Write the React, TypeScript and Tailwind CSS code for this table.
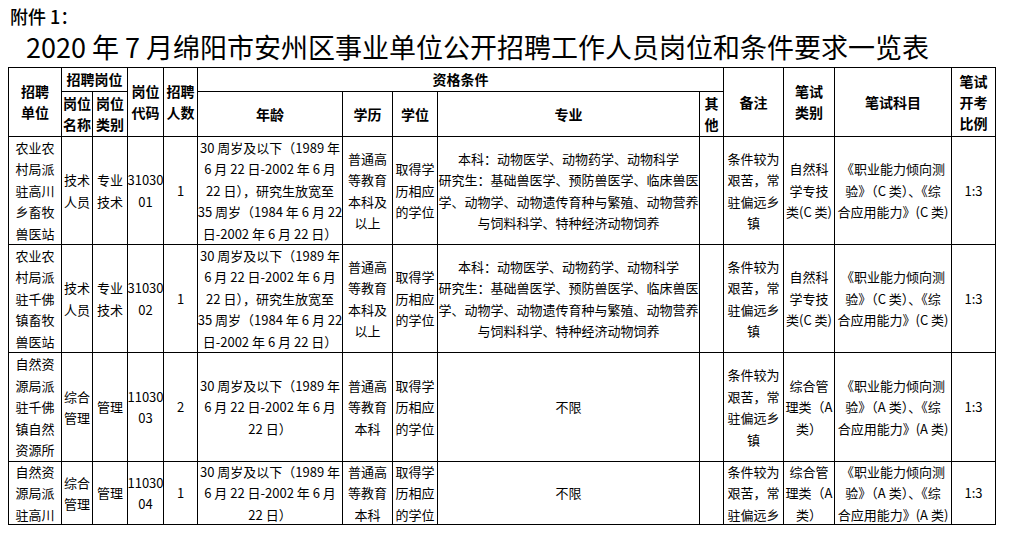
import React from "react";

// column widths taken from the source table (px)
// 单位 名称 类别 代码 人数 年龄 学历 学位 专业 其他 备注 类别 科目 比例

type CellProps = {
  lines: string[];
  className?: string;
  head?: boolean;
};

function Cell({ lines, className = "", head = false }: CellProps) {
  return (
    <div
      className={`flex flex-col items-center justify-center overflow-hidden border-r border-b border-black text-center ${
        head ? "text-[14px] font-bold leading-[21px]" : "text-[13px] leading-[21.5px]"
      } ${className}`}
    >
      {lines.map((l, i) => (
        <div key={i} className="whitespace-nowrap">
          {l}
        </div>
      ))}
    </div>
  );
}

const ageLong = [
  "30 周岁及以下（1989 年",
  "6 月 22 日-2002 年 6 月",
  "22 日），研究生放宽至",
  "35 周岁（1984 年 6 月 22",
  "日-2002 年 6 月 22 日）",
];
const ageShort = ["30 周岁及以下（1989 年", "6 月 22 日-2002 年 6 月", "22 日）"];
const major = [
  "本科：动物医学、动物药学、动物科学",
  "研究生：基础兽医学、预防兽医学、临床兽医",
  "学、动物学、动物遗传育种与繁殖、动物营养",
  "与饲料科学、特种经济动物饲养",
];
const remark = ["条件较为", "艰苦，常", "驻偏远乡", "镇"];
const subjectC = ["《职业能力倾向测", "验》（C 类）、《综", "合应用能力》(C 类)"];
const subjectA = ["《职业能力倾向测", "验》（A 类）、《综", "合应用能力》(A 类)"];

type Row = {
  unit: string[];
  name: string[];
  kind: string[];
  code: string[];
  num: string;
  age: string[];
  edu: string[];
  degree: string[];
  major: string[];
  remark: string[];
  testKind: string[];
  subject: string[];
};

const rows: Row[] = [
  {
    unit: ["农业农", "村局派", "驻高川", "乡畜牧", "兽医站"],
    name: ["技术", "人员"],
    kind: ["专业", "技术"],
    code: ["31030", "01"],
    num: "1",
    age: ageLong,
    edu: ["普通高", "等教育", "本科及", "以上"],
    degree: ["取得学", "历相应", "的学位"],
    major,
    remark,
    testKind: ["自然科", "学专技", "类(C 类)"],
    subject: subjectC,
  },
  {
    unit: ["农业农", "村局派", "驻千佛", "镇畜牧", "兽医站"],
    name: ["技术", "人员"],
    kind: ["专业", "技术"],
    code: ["31030", "02"],
    num: "1",
    age: ageLong,
    edu: ["普通高", "等教育", "本科及", "以上"],
    degree: ["取得学", "历相应", "的学位"],
    major,
    remark,
    testKind: ["自然科", "学专技", "类(C 类)"],
    subject: subjectC,
  },
  {
    unit: ["自然资", "源局派", "驻千佛", "镇自然", "资源所"],
    name: ["综合", "管理"],
    kind: ["管理"],
    code: ["11030", "03"],
    num: "2",
    age: ageShort,
    edu: ["普通高", "等教育", "本科"],
    degree: ["取得学", "历相应", "的学位"],
    major: ["不限"],
    remark,
    testKind: ["综合管", "理类（A", "类）"],
    subject: subjectA,
  },
  // last row runs past the page edge, only the visible part is kept
  {
    unit: ["自然资", "源局派", "驻高川"],
    name: ["综合", "管理"],
    kind: ["管理"],
    code: ["11030", "04"],
    num: "1",
    age: ageShort,
    edu: ["普通高", "等教育", "本科"],
    degree: ["取得学", "历相应", "的学位"],
    major: ["不限"],
    remark: ["条件较为", "艰苦，常", "驻偏远乡"],
    testKind: ["综合管", "理类（A", "类）"],
    subject: subjectA,
  },
];

export default function App() {
  return (
    <div className="h-[536px] w-[1009px] overflow-hidden bg-white font-['Noto_Sans_CJK_SC',sans-serif] text-black">
      <div className="pl-[10px] pt-[5px] text-[18px] font-medium leading-[22px]">附件 1：</div>
      <div className="pl-[26px] text-[27px] leading-[40px]">
        2020 年 7 月绵阳市安州区事业单位公开招聘工作人员岗位和条件要求一览表
      </div>

      <div className="ml-[8px] grid w-[988px] grid-cols-[53px_31px_35px_36px_34px_145px_50px_45px_262px_24px_60px_51px_117px_44px] grid-rows-[24px_45px_108px_108px_109px_63px] border-l border-t border-black">
        {/* header */}
        <Cell head lines={["招聘", "单位"]} className="row-span-2" />
        <Cell head lines={["招聘岗位"]} className="col-span-2" />
        <Cell head lines={["岗位", "代码"]} className="row-span-2" />
        <Cell head lines={["招聘", "人数"]} className="row-span-2" />
        <Cell head lines={["资格条件"]} className="col-span-5" />
        <Cell head lines={["备注"]} className="row-span-2" />
        <Cell head lines={["笔试", "类别"]} className="row-span-2" />
        <Cell head lines={["笔试科目"]} className="row-span-2" />
        <Cell head lines={["笔试", "开考", "比例"]} className="row-span-2" />

        <Cell head lines={["岗位", "名称"]} />
        <Cell head lines={["岗位", "类别"]} />
        <Cell head lines={["年龄"]} />
        <Cell head lines={["学历"]} />
        <Cell head lines={["学位"]} />
        <Cell head lines={["专业"]} />
        <Cell head lines={["其", "他"]} />

        {/* body */}
        {rows.map((r) => (
          <React.Fragment key={r.code.join("")}>
            <Cell lines={r.unit} />
            <Cell lines={r.name} />
            <Cell lines={r.kind} />
            <Cell lines={r.code} />
            <Cell lines={[r.num]} />
            <Cell lines={r.age} />
            <Cell lines={r.edu} />
            <Cell lines={r.degree} />
            <Cell lines={r.major} />
            <Cell lines={[""]} />
            <Cell lines={r.remark} />
            <Cell lines={r.testKind} />
            <Cell lines={r.subject} />
            <Cell lines={["1:3"]} />
          </React.Fragment>
        ))}
      </div>
    </div>
  );
}
